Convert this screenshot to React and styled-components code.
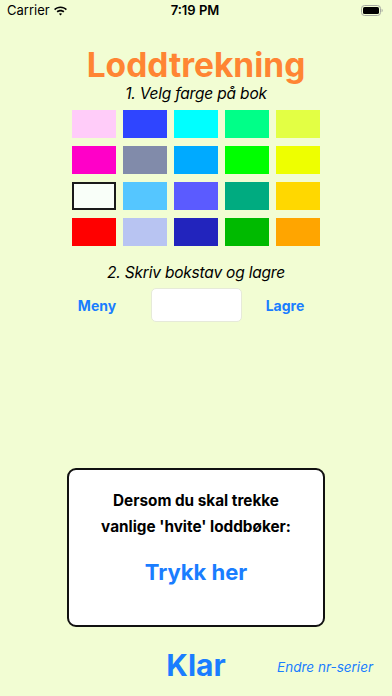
import React from 'react'
import styled, { createGlobalStyle } from 'styled-components'

const GlobalStyle = createGlobalStyle`
  html, body {
    margin: 0;
    padding: 0;
    background: #f2fdd3;
  }
  * {
    box-sizing: border-box;
  }
`

const colors = [
  '#ffccf9', '#2f45ff', '#00ffff', '#00ff88', '#e3ff44',
  '#ff00c8', '#818baa', '#00aaff', '#00ff00', '#eeff00',
  '#f9fff9', '#55c6ff', '#5b5bff', '#00ab80', '#ffd800',
  '#ff0000', '#b8c4f2', '#2224bd', '#00ba00', '#ffa500',
]

const App = () => {
  return (
    <>
      <GlobalStyle />
      <Page>
        <StatusBar>
          <Carrier>
            Carrier
            <svg width='15' height='11' viewBox='0 0 14 10'>
              <path d='M7 1.2c2.3 0 4.4.9 6 2.4l-1 1.1C10.7 3.4 8.9 2.7 7 2.7S3.3 3.4 2 4.7L1 3.6C2.6 2.1 4.7 1.2 7 1.2z' fill='#000' />
              <path d='M7 4.4c1.4 0 2.6.5 3.6 1.4l-1 1.1C8.8 6.2 7.9 5.9 7 5.9s-1.8.3-2.6 1L3.4 5.8C4.4 4.9 5.6 4.4 7 4.4z' fill='#000' />
              <path d='M7 7.5c.6 0 1.1.2 1.5.6L7 9.7 5.5 8.1c.4-.4.9-.6 1.5-.6z' fill='#000' />
            </svg>
          </Carrier>
          <Clock>7:19 PM</Clock>
          <Battery>
            <svg width='22' height='11' viewBox='0 0 22 11'>
              <rect x='0.5' y='0.5' width='19' height='10' rx='3' fill='none' stroke='#a5a8a0' />
              <rect x='2' y='2' width='16' height='7' rx='1.6' fill='#000' />
              <path d='M20.6 3.8v3.4c.7-.2 1.1-.9 1.1-1.7s-.4-1.5-1.1-1.7z' fill='#a5a8a0' />
            </svg>
          </Battery>
        </StatusBar>

        <Title>Loddtrekning</Title>
        <Step $top={3}>1. Velg farge på bok</Step>

        <ColorGrid>
          {colors.map((c, i) => (
            <Swatch key={i} $color={c} $selected={i === 10} />
          ))}
        </ColorGrid>

        <Step $top={17}>2. Skriv bokstav og lagre</Step>
        <InputRow>
          <LinkButton>Meny</LinkButton>
          <LetterInput />
          <LinkButton>Lagre</LinkButton>
        </InputRow>

        <InfoBox>
          <InfoText>
            Dersom du skal trekke
            <br />
            vanlige 'hvite' loddbøker:
          </InfoText>
          <PressHere>Trykk her</PressHere>
        </InfoBox>

        <Footer>
          <span />
          <Done>Klar</Done>
          <EditSeries>Endre nr-serier</EditSeries>
        </Footer>
      </Page>
    </>
  )
}

export default App

const Page = styled.div`
  height: 696px;
  display: flex;
  flex-direction: column;
  align-items: center;
  background: #f2fdd3;
  font-family: Inter, 'Liberation Sans', sans-serif;
  color: #000;
`

const StatusBar = styled.div`
  width: 100%;
  height: 20px;
  display: grid;
  grid-template-columns: 1fr auto 1fr;
  align-items: center;
  padding: 0 9px 0 7px;
`

const Carrier = styled.div`
  display: flex;
  align-items: center;
  gap: 3px;
  font-size: 13px;
`

const Clock = styled.div`
  font-size: 13px;
  font-weight: 600;
`

const Battery = styled.div`
  display: flex;
  justify-content: flex-end;
`

const Title = styled.h1`
  margin: 29px 0 0;
  font-size: 33.5px;
  line-height: 32px;
  font-weight: 700;
  color: #ff8533;
`

const Step = styled.p`
  margin: ${(p) => p.$top || 0}px 0 0;
  font-size: 15.5px;
  line-height: 20px;
  font-style: italic;
  letter-spacing: -0.2px;
`

const ColorGrid = styled.div`
  margin-top: 6px;
  display: grid;
  grid-template-columns: repeat(5, 44px);
  grid-auto-rows: 28px;
  column-gap: 7px;
  row-gap: 8px;
`

const Swatch = styled.div`
  background: ${(p) => p.$color};
  border: ${(p) => (p.$selected ? '2px solid #1a1a1a' : 'none')};
`

const InputRow = styled.div`
  width: 100%;
  margin-top: 5px;
  display: flex;
  align-items: center;
  padding-left: 61px;
`

const LinkButton = styled.span`
  width: 72px;
  text-align: center;
  font-size: 14px;
  font-weight: 700;
  color: #1a7dff;

  &:last-child {
    margin-left: 7px;
  }
`

const LetterInput = styled.div`
  width: 91px;
  height: 34px;
  margin-left: 18px;
  background: #fff;
  border: 1px solid #e6ead9;
  border-radius: 5px;
`

const InfoBox = styled.div`
  margin-top: auto;
  width: 258px;
  height: 159px;
  background: #fff;
  border: 2px solid #111;
  border-radius: 9px;
  display: flex;
  flex-direction: column;
  align-items: center;
  padding-top: 18px;
`

const InfoText = styled.p`
  margin: 0;
  text-align: center;
  font-size: 15.3px;
  font-weight: 700;
  line-height: 26px;
`

const PressHere = styled.span`
  margin-top: 19px;
  font-size: 22px;
  font-weight: 700;
  color: #1a7dff;
`

const Footer = styled.div`
  width: 100%;
  margin: 20px 0 13px;
  display: grid;
  grid-template-columns: 1fr auto 1fr;
  align-items: center;
`

const Done = styled.span`
  font-size: 30px;
  line-height: 36px;
  font-weight: 700;
  color: #1a7dff;
`

const EditSeries = styled.span`
  justify-self: end;
  margin-right: 19px;
  padding-top: 4px;
  font-size: 13.5px;
  font-style: italic;
  color: #1a7dff;
`
